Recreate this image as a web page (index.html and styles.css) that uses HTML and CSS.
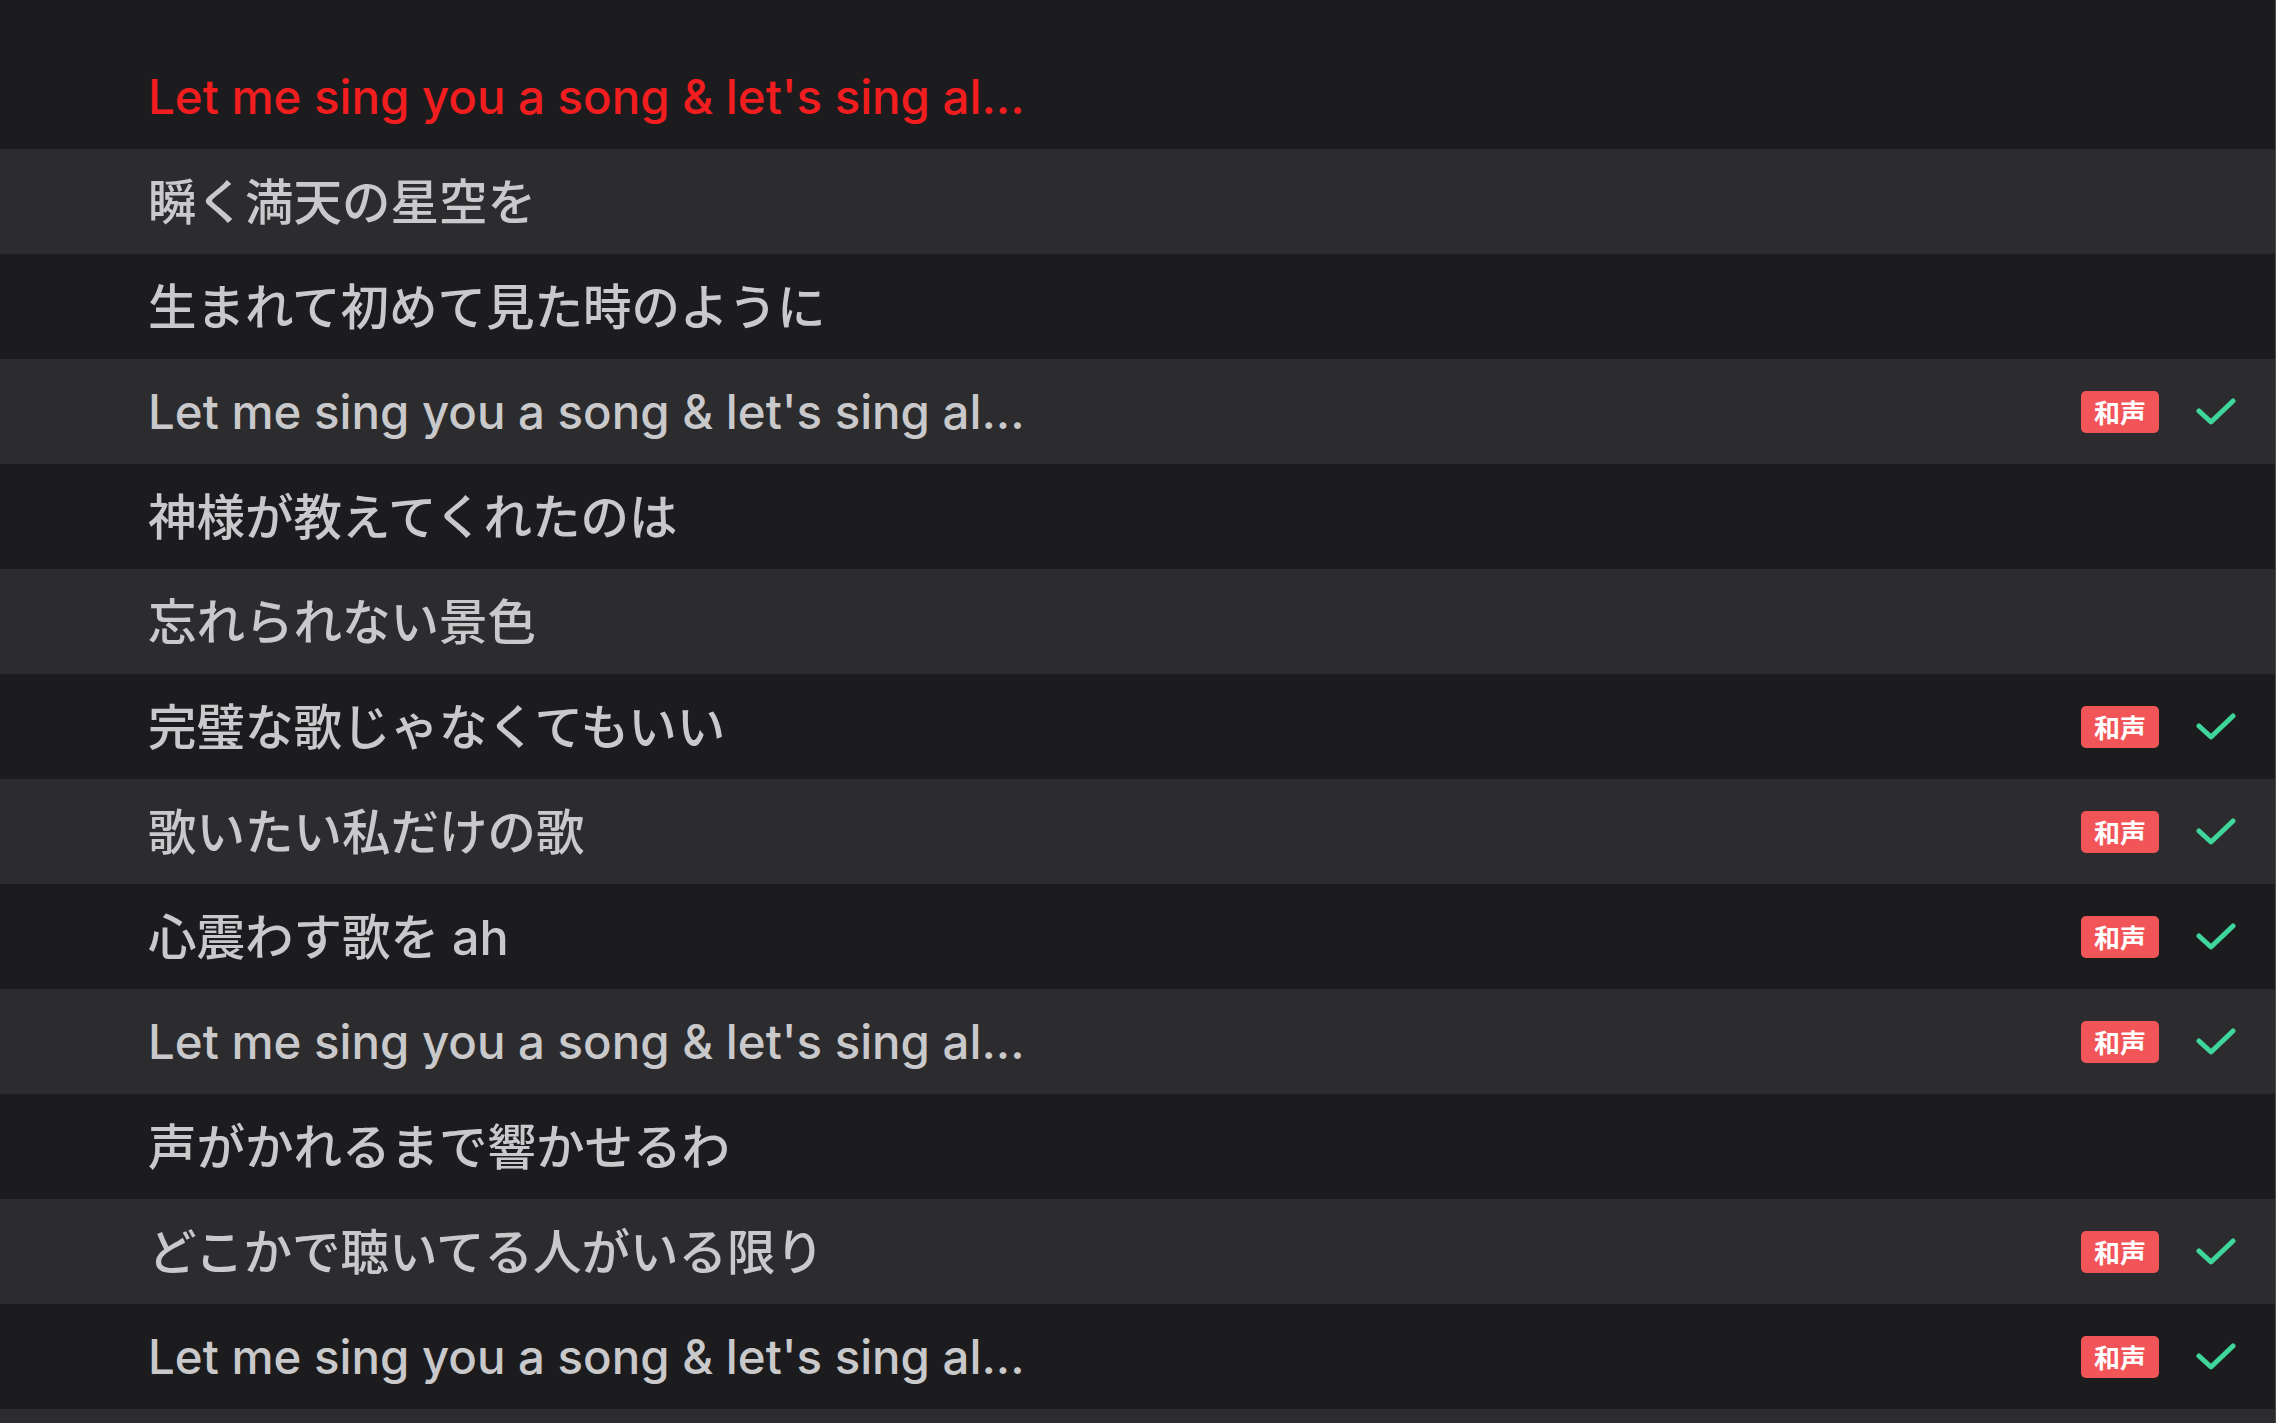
FILE: index.html
```html
<!DOCTYPE html>
<html lang="ja">
<head>
  <meta charset="UTF-8">
  <meta name="viewport" content="width=device-width, initial-scale=1">
  <title>歌詞リスト</title>
  <link rel="stylesheet" href="styles.css">
</head>
<body>
  <div class="lyrics">
    <!-- 再生中の行 -->
    <div class="line current"><span class="text">Let me sing you a song &amp; let's sing al...</span></div>
    <div class="line ja"><span class="text">瞬く満天の星空を</span></div>
    <div class="line ja"><span class="text">生まれて初めて見た時のように</span></div>
    <div class="line">
      <span class="text">Let me sing you a song &amp; let's sing al...</span>
      <span class="badge">和声</span>
      <svg class="check" viewBox="0 0 40 28"><path d="M3 13 L15 24 L37 3"/></svg>
    </div>
    <div class="line ja"><span class="text">神様が教えてくれたのは</span></div>
    <div class="line ja"><span class="text">忘れられない景色</span></div>
    <div class="line ja">
      <span class="text">完璧な歌じゃなくてもいい</span>
      <span class="badge">和声</span>
      <svg class="check" viewBox="0 0 40 28"><path d="M3 13 L15 24 L37 3"/></svg>
    </div>
    <div class="line ja">
      <span class="text">歌いたい私だけの歌</span>
      <span class="badge">和声</span>
      <svg class="check" viewBox="0 0 40 28"><path d="M3 13 L15 24 L37 3"/></svg>
    </div>
    <div class="line ja">
      <span class="text">心震わす歌を ah</span>
      <span class="badge">和声</span>
      <svg class="check" viewBox="0 0 40 28"><path d="M3 13 L15 24 L37 3"/></svg>
    </div>
    <div class="line">
      <span class="text">Let me sing you a song &amp; let's sing al...</span>
      <span class="badge">和声</span>
      <svg class="check" viewBox="0 0 40 28"><path d="M3 13 L15 24 L37 3"/></svg>
    </div>
    <div class="line ja"><span class="text">声がかれるまで響かせるわ</span></div>
    <div class="line ja">
      <span class="text">どこかで聴いてる人がいる限り</span>
      <span class="badge">和声</span>
      <svg class="check" viewBox="0 0 40 28"><path d="M3 13 L15 24 L37 3"/></svg>
    </div>
    <div class="line">
      <span class="text">Let me sing you a song &amp; let's sing al...</span>
      <span class="badge">和声</span>
      <svg class="check" viewBox="0 0 40 28"><path d="M3 13 L15 24 L37 3"/></svg>
    </div>
    <div class="line"></div>
  </div>
</body>
</html>
```

FILE: styles.css
```css
:root {
  --bg-dark:  #1c1c1e;
  --bg-light: #2c2c2e;
  --text:     #c9c9cb;
  --red:      #f21d1f;
  --badge:    #f25558;
  --green:    #3fd69b;
  --font-base: Inter, "Noto Sans CJK JP", sans-serif;
}
*, *::before, *::after { box-sizing: border-box; }
html, body {
  margin: 0; padding: 0;
  height: 100%;
  overflow: hidden;
}
body {
  font-family: var(--font-base);
  background: var(--bg-dark);
  color: var(--text);
}

/* 歌詞リスト */
.lyrics {
  padding-top: 44px;
  border-right: 1px solid #4a4a4c;
}
.line {
  display: flex;
  align-items: center;
  height: 105px;
  padding: 0 39px 0 148px;
  background: var(--bg-dark);
}
.line:nth-child(even) { background: var(--bg-light); }
.line .text {
  font-size: 47.4px;
  font-weight: 500;
  white-space: nowrap;
}
/* 日本語の行は少し大きめ・少し上へ */
.line.ja .text {
  font-size: 48.5px;
  padding-bottom: 6px;
}
.line.current .text { color: var(--red); }

/* 和声バッジ */
.badge {
  margin-left: auto;
  width: 78px; height: 42px;
  display: flex; align-items: center; justify-content: center;
  background: var(--badge);
  color: #fff;
  border-radius: 5px;
  font-size: 26px;
  font-weight: 700;
}
.check {
  width: 40px; height: 28px;
  margin-left: 37px;
}
.check path {
  fill: none;
  stroke: var(--green);
  stroke-width: 5;
  stroke-linecap: round;
  stroke-linejoin: round;
}
```
